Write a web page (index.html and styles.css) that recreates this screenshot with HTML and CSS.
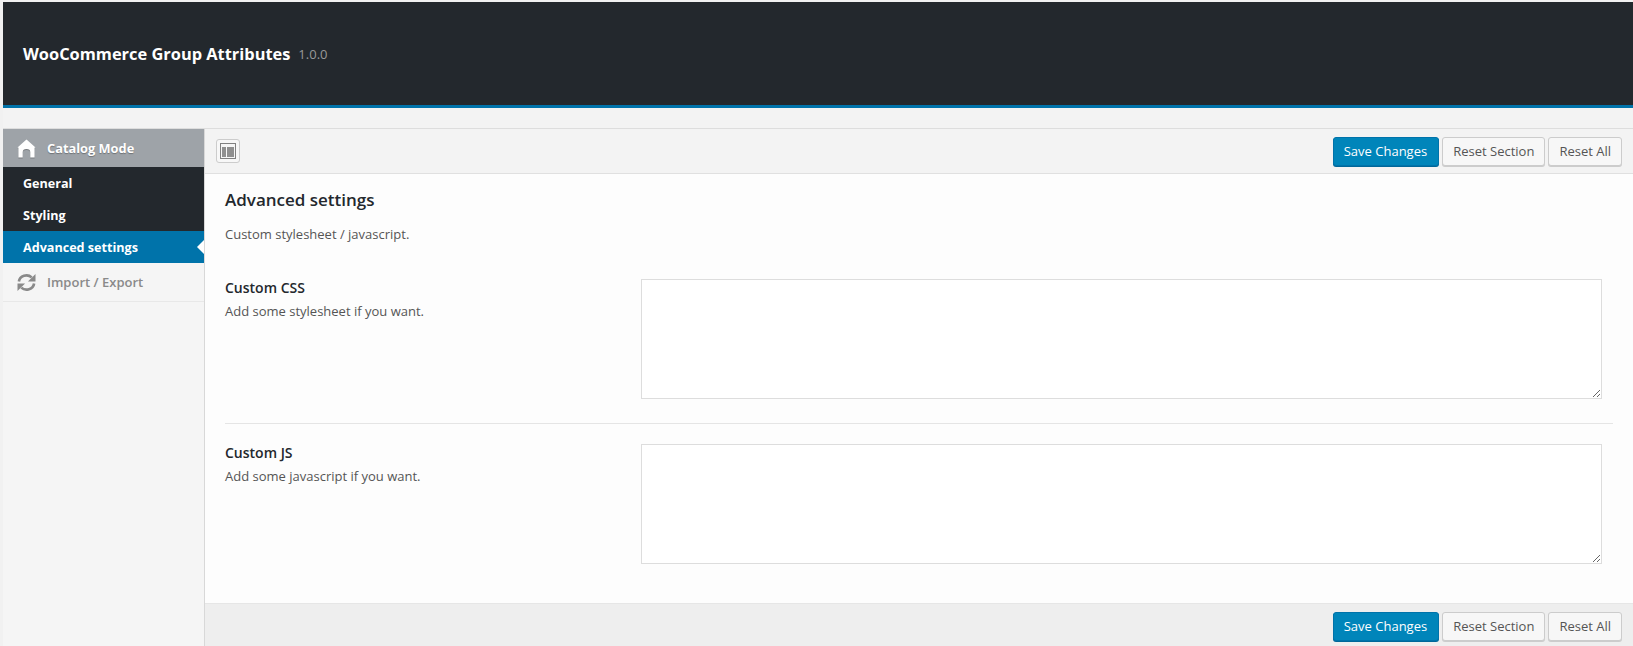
FILE: index.html
```html
<!DOCTYPE html>
<html lang="en">
<head>
<meta charset="utf-8">
<title>WooCommerce Group Attributes</title>
<link rel="stylesheet" href="styles.css">
</head>
<body>
<div class="panel">
  <header class="header">
    <h1 class="title">WooCommerce Group Attributes</h1>
    <span class="version">1.0.0</span>
  </header>
  <div class="strip"></div>
  <div class="layout">
    <nav class="sidebar">
      <div class="group">
        <svg class="icon home" viewBox="0 0 20 20"><path fill="#fff" d="M10 0.5 L19.5 9 H18.5 V19.5 H14 V14 Q14 10.5 10 10.5 Q6 10.5 6 14 V19.5 H1.5 V9 H0.5 Z"/></svg>
        <span>Catalog Mode</span>
      </div>
      <a class="sub">General</a>
      <a class="sub">Styling</a>
      <a class="sub active">Advanced settings</a>
      <div class="group muted">
        <svg class="icon" viewBox="0 0 20 20" fill="none"><path stroke="#8a8a8a" stroke-width="2.8" d="M2 9 A8 7.5 0 0 1 15.5 4.6"/><path fill="#8a8a8a" d="M19.5 1 V9 H11.5 Z"/><path stroke="#8a8a8a" stroke-width="2.8" d="M18 11 A8 7.5 0 0 1 4.5 15.4"/><path fill="#8a8a8a" d="M0.5 19 V11 H8.5 Z"/></svg>
        <span>Import / Export</span>
      </div>
    </nav>
    <main class="main">
      <div class="bar bar-top">
        <button class="expand" type="button" aria-label="Expand">
          <svg viewBox="0 0 16 16"><rect x="0.5" y="0.5" width="15" height="15" fill="#f6f6f6" stroke="#808080"/><rect x="2" y="4" width="4" height="10" fill="#8f8f8f"/><rect x="7" y="4" width="7" height="10" fill="#8f8f8f"/></svg>
        </button>
        <div class="actions">
          <button class="btn primary" type="button">Save Changes</button>
          <button class="btn" type="button">Reset Section</button>
          <button class="btn" type="button">Reset All</button>
        </div>
      </div>
      <section class="content">
        <h2 class="heading">Advanced settings</h2>
        <p class="intro">Custom stylesheet / javascript.</p>
        <div class="field first">
          <div class="label"><h3>Custom CSS</h3><p>Add some stylesheet if you want.</p></div>
          <textarea class="input"></textarea>
        </div>
        <div class="field">
          <div class="label"><h3>Custom JS</h3><p>Add some javascript if you want.</p></div>
          <textarea class="input"></textarea>
        </div>
      </section>
      <div class="bar bar-bottom">
        <div class="actions">
          <button class="btn primary" type="button">Save Changes</button>
          <button class="btn" type="button">Reset Section</button>
          <button class="btn" type="button">Reset All</button>
        </div>
      </div>
    </main>
  </div>
</div>
</body>
</html>
```
FILE: styles.css
```css
* { box-sizing: border-box; }
html, body { height: 100%; }
body { margin: 0; background: #f1f1f1; font-family: "Open Sans", sans-serif; color: #555; overflow: hidden; }
.panel { height: 646px; padding: 2px 0 0 3px; display: flex; flex-direction: column; }
.header { height: 106px; flex: none; background: #23282d; border-bottom: 3px solid #0073aa; display: flex; align-items: center; padding: 0 20px; gap: 8px; }
.title { margin: 0; font-size: 16.4px; font-weight: 700; color: #fff; }
.version { font-size: 13px; color: #999; }
.strip { height: 21px; flex: none; background: #f3f3f3; border-bottom: 1px solid #ddd; }
.layout { flex: 1; display: flex; min-height: 0; }
.sidebar { width: 202px; flex: none; background: #f5f5f5; border-right: 1px solid #d8d8d8; }
.group { height: 38px; display: flex; align-items: center; gap: 11px; padding-left: 14px; background: #9ea3a8; color: #fff; font-size: 12.8px; font-weight: 700; text-shadow: 0 1px 1px rgba(0,0,0,.3); }
.icon { width: 19px; height: 19px; flex: none; }
.home { filter: drop-shadow(0 1px 0 rgba(0,0,0,.25)); }
.sub { position: relative; display: flex; align-items: center; height: 32px; padding-left: 20px; background: #23282d; color: #fff; font-size: 12.6px; font-weight: 700; }
.sub.active { background: #0073aa; }
.sub.active::after { content: ""; position: absolute; right: 0; top: 9px; border: 7px solid transparent; border-right-color: #fff; border-left-width: 0; }
.group.muted { height: 39px; background: #f5f5f5; color: #8a8a8a; border-bottom: 1px solid #e8e8e8; font-size: 13px; font-weight: 600; text-shadow: none; }
.main { flex: 1; min-width: 0; display: flex; flex-direction: column; background: #fdfdfd; }
.bar { flex: none; display: flex; align-items: center; justify-content: space-between; padding: 0 11px; background: #f3f3f3; }
.bar-top { height: 45px; border-bottom: 1px solid #e0e0e0; }
.bar-bottom { height: 43px; margin-top: auto; justify-content: flex-end; background: #eee; border-top: 1px solid #e6e6e6; padding-top: 2px; }
.expand { width: 24px; height: 24px; padding: 0; background: #f7f7f7; border: 1px solid #ccc; border-radius: 3px; display: flex; align-items: center; justify-content: center; }
.expand svg { width: 16px; height: 16px; flex: none; }
.actions { display: flex; gap: 3px; }
.btn { height: 29px; padding: 0 10px; font: 400 13px "Open Sans", sans-serif; color: #555; background: #f7f7f7; border: 1px solid #ccc; border-radius: 3px; box-shadow: 0 1px 0 #ccc; }
.btn.primary { padding-right: 11px; background: #0085ba; border-color: #0073aa; color: #fff; box-shadow: 0 1px 0 #006799; }
.content { padding: 14px 20px 0; }
.heading { margin: 0; font-size: 17px; font-weight: 600; color: #23282d; line-height: 24px; }
.intro { margin: 12px 0 0; font-size: 13px; line-height: 20px; color: #555; }
.field { display: flex; padding-bottom: 24px; }
.field.first { margin-top: 35px; border-bottom: 1px solid #e5e5e5; }
.field + .field { padding-top: 20px; padding-bottom: 0; }
.label { width: 416px; flex: none; margin-top: -1px; }
.label h3 { margin: 0; font-size: 14px; font-weight: 600; color: #23282d; line-height: 19px; }
.label p { margin: 4px 0 0; font-size: 13px; line-height: 20px; color: #555; }
.input { width: 961px; height: 120px; border: 1px solid #ddd; background: #fff; display: block; }
```
